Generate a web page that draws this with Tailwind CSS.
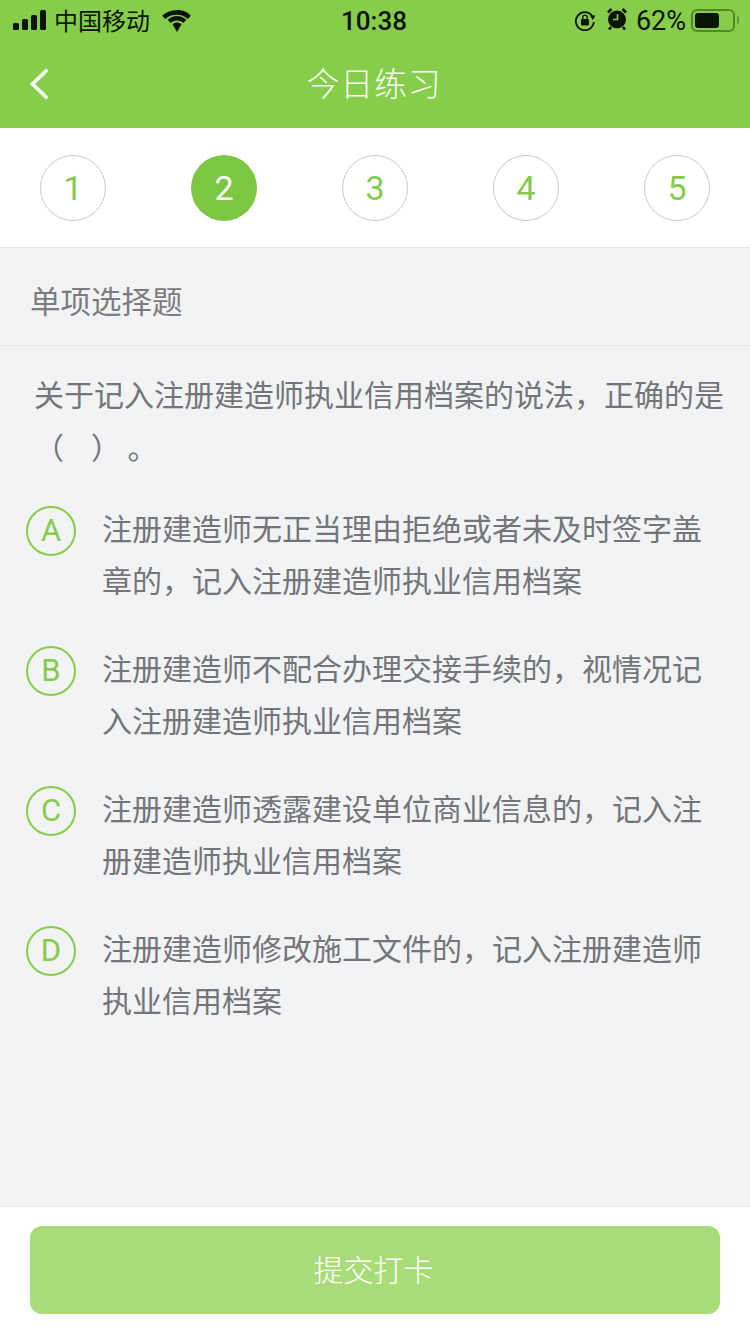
<!DOCTYPE html>
<html lang="zh-CN">
<head>
    <meta charset="UTF-8">
    <meta name="viewport" content="width=device-width, initial-scale=1.0">
    <title>今日练习</title>
    <script src="https://cdn.jsdelivr.net/npm/@tailwindcss/browser@4"></script>
</head>
<body class="w-[750px] h-[1334px] overflow-hidden flex flex-col bg-[#f2f3f5] font-['Noto_Sans_CJK_SC','Noto_Sans',sans-serif]">
    <!-- status bar + title -->
    <header class="h-[128px] bg-[#87cd4b] shrink-0">
        <div class="h-[40px] pl-[13px] pr-[11px] flex items-center justify-between text-[#0b1505] relative">
            <div class="flex items-center">
                <svg width="35" height="20" viewBox="0 0 35 20" fill="currentColor">
                    <rect x="0" y="13" width="6" height="7" rx="1.5"/>
                    <rect x="9" y="9" width="6" height="11" rx="1.5"/>
                    <rect x="18" y="5" width="6" height="15" rx="1.5"/>
                    <rect x="27" y="0" width="6" height="20" rx="1.5"/>
                </svg>
                <span class="ml-[7px] text-[24px] leading-[30px] w-[96px] -translate-x-[1px]">中国移动</span>
                <svg class="ml-[11px] mt-[1px]" width="30" height="22" viewBox="0 0 30 22" fill="currentColor">
                    <path d="M15 4.700c4.200 0 8 1.600 10.800 4.200l3-3.200C25.900 2.100 20.700 0 15 0S4.100 2.100.2 5.700l3 3.200C6 6.300 9.800 4.700 15 4.700z"/>
                    <path d="M15 10.500c2.500 0 4.700.9 6.400 2.400l3-3.200C21.900 7.400 18.600 6 15 6S8.100 7.400 5.600 9.700l3 3.200c1.700-1.500 3.900-2.400 6.400-2.400z"/>
                    <path d="M15 12.500c-1.800 0-3.300.7-4.500 1.700L15 22l4.500-7.800c-1.200-1-2.700-1.700-4.500-1.700z"/>
                </svg>
            </div>
            <span class="absolute left-[341px] top-[4px] text-[26px] leading-[34px] font-medium font-['Roboto',sans-serif]">10:38</span>
            <div class="flex items-center">
                <svg width="22" height="22" viewBox="0 0 22 22" fill="none">
                    <path d="M18.500 7.500A9 9 0 1 0 19.800 13" stroke="currentColor" stroke-width="1.800"/>
                    <path d="M16 6.500h5.500L18.700 11z" fill="currentColor"/>
                    <rect x="7" y="10" width="8" height="6.500" rx="1" fill="currentColor"/>
                    <path d="M8.800 10V8.300a2.200 2.200 0 0 1 4.400 0V10" stroke="currentColor" stroke-width="1.400"/>
                </svg>
                <svg class="ml-[10px] -mt-[2px]" width="22" height="24" viewBox="0 0 22 24" fill="none">
                    <circle cx="11" cy="12.500" r="9" fill="currentColor"/>
                    <path d="M11.500 7v5.500H7" stroke="#87cd4b" stroke-width="1.600"/>
                    <path d="M2 5.500 5.500 2M20 5.500 16.500 2M5 20l-2 2.500M17 20l2 2.500" stroke="currentColor" stroke-width="2.600"/>
                </svg>
                <span class="ml-[8px] text-[27px] leading-[30px] mt-[1px] font-['Roboto',sans-serif]">62%</span>
                <div class="ml-[5px] w-[44px] h-[23px] rounded-[6px] border-2 border-[#4f8a2b] p-[2px]">
                    <div class="w-[24px] h-full rounded-[3px] bg-[#0b1505]"></div>
                </div>
                <div class="w-[2px] h-[8px] ml-[2px] rounded-r bg-[#5c9a35]"></div>
            </div>
        </div>
        <div class="h-[88px] relative flex items-center justify-center pb-[4px]">
            <svg class="absolute left-[29px] top-[28px]" width="20" height="32" viewBox="0 0 20 32" fill="none">
                <path d="M17 3 3.500 16 17 29" stroke="#fff" stroke-width="3.600" stroke-linecap="round"/>
            </svg>
            <h1 class="text-[33px] leading-[44px] text-white/95 font-light tracking-[0.75px] -translate-x-[1px]">今日练习</h1>
        </div>
    </header>

    <!-- question numbers -->
    <nav class="h-[120px] shrink-0 bg-white border-b border-[#e6e7e9] px-[40px] pt-[27px] flex justify-between items-start font-['Roboto',sans-serif]">
        <span class="w-[66px] h-[66px] pt-[1px] rounded-full border border-[#c9c9c9] flex items-center justify-center text-[34px] text-[#86cb50]">1</span>
        <span class="w-[66px] h-[66px] pt-[1px] rounded-full bg-[#7cc644] flex items-center justify-center text-[34px] text-white">2</span>
        <span class="w-[66px] h-[66px] pt-[1px] rounded-full border border-[#c9c9c9] flex items-center justify-center text-[34px] text-[#86cb50]">3</span>
        <span class="w-[66px] h-[66px] pt-[1px] rounded-full border border-[#c9c9c9] flex items-center justify-center text-[34px] text-[#86cb50]">4</span>
        <span class="w-[66px] h-[66px] pt-[1px] rounded-full border border-[#c9c9c9] flex items-center justify-center text-[34px] text-[#86cb50]">5</span>
    </nav>

    <main class="flex-1 text-[#737578] text-[30px]">
        <div class="h-[98px] border-b border-[#e6e7e9] pl-[30px] flex items-center text-[#7a7c7f] text-[30.5px] pt-[9px]">单项选择题</div>

        <p class="pl-[34px] pr-[20px] pt-[21px] leading-[53px] w-[750px]">关于记入注册建造师执业信用档案的说法，正确的是（&nbsp;&nbsp;&nbsp;&nbsp;）&nbsp;。</p>

        <ul class="mt-[28px] pl-[26px] pr-[40px] flex flex-col gap-[36px]">
            <li class="flex">
                <span class="w-[50px] h-[50px] mt-[5px] shrink-0 rounded-full border-2 border-[#87cd4b] flex items-center justify-center text-[#86cb50] text-[31px] font-['Roboto',sans-serif]">A</span>
                <span class="ml-[27px] -translate-x-[1px] leading-[52px]">注册建造师无正当理由拒绝或者未及时签字盖章的，记入注册建造师执业信用档案</span>
            </li>
            <li class="flex">
                <span class="w-[50px] h-[50px] mt-[5px] shrink-0 rounded-full border-2 border-[#87cd4b] flex items-center justify-center text-[#86cb50] text-[31px] font-['Roboto',sans-serif]">B</span>
                <span class="ml-[27px] -translate-x-[1px] leading-[52px]">注册建造师不配合办理交接手续的，视情况记入注册建造师执业信用档案</span>
            </li>
            <li class="flex">
                <span class="w-[50px] h-[50px] mt-[5px] shrink-0 rounded-full border-2 border-[#87cd4b] flex items-center justify-center text-[#86cb50] text-[31px] font-['Roboto',sans-serif]">C</span>
                <span class="ml-[27px] -translate-x-[1px] leading-[52px]">注册建造师透露建设单位商业信息的，记入注册建造师执业信用档案</span>
            </li>
            <li class="flex">
                <span class="w-[50px] h-[50px] mt-[5px] shrink-0 rounded-full border-2 border-[#87cd4b] flex items-center justify-center text-[#86cb50] text-[31px] font-['Roboto',sans-serif]">D</span>
                <span class="ml-[27px] -translate-x-[1px] leading-[52px]">注册建造师修改施工文件的，记入注册建造师执业信用档案</span>
            </li>
        </ul>
    </main>

    <footer class="h-[128px] shrink-0 bg-white border-t border-[#e8e9ec] px-[30px] pt-[19px]">
        <button class="w-full h-[88px] pr-[3px] pb-[3px] rounded-[12px] bg-[#a9dc79] text-white text-[30px] font-light">提交打卡</button>
    </footer>
</body>
</html>
